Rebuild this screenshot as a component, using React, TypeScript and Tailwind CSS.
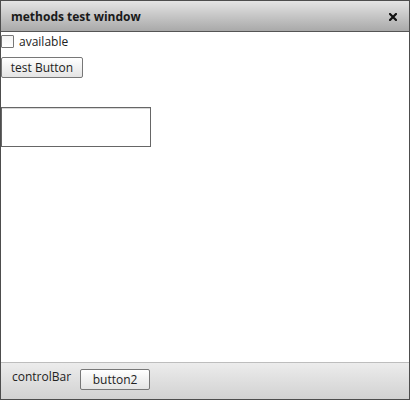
import React from "react";

export default function App() {
  return (
    <div
      className="w-[410px] h-[400px] border border-[#4d4d4d] flex flex-col bg-white text-[#222]"
      style={{ fontFamily: '"Open Sans", "Noto Sans", sans-serif' }}
    >
      <div className="h-[31px] shrink-0 border-b border-[#555] bg-gradient-to-b from-[#e4e4e4] to-[#a9a9a9] flex items-center justify-between pl-[10px] pr-[12px]">
        <span className="text-[12px] font-bold leading-none text-[#1a1a1a] mt-[1px]">methods test window</span>
        <svg width="8" height="8" viewBox="0 0 8 8" className="mt-[1px]">
          <path d="M1 1 L7 7 M7 1 L1 7" stroke="#111" strokeWidth="2.2" strokeLinecap="square" />
        </svg>
      </div>
      <div className="flex-1 flex flex-col items-start">
        <label className="flex items-center mt-[3px] gap-[5px]">
          <span className="w-[13px] h-[13px] border border-[#777] bg-gradient-to-b from-[#f4f4f4] to-white rounded-[1px]" />
          <span className="text-[12px] leading-none">available</span>
        </label>
        <button className="mt-[9px] w-[82px] h-[21px] border border-[#777] rounded-[2px] bg-gradient-to-b from-white to-[#e4e4e4] text-[12px] leading-none flex items-center justify-center">
          test Button
        </button>
        <div className="mt-[29px] w-[150px] h-[40px] border border-[#666] shadow-[inset_0_1px_0_#d8d8d8] bg-white" />
      </div>
      <div className="h-[37px] shrink-0 border-t border-[#bdbdbd] bg-gradient-to-b from-[#ececec] to-[#d2d2d2] flex items-start pl-[11px]">
        <span className="text-[12px] leading-none mt-[8px]">controlBar</span>
        <button className="ml-[9px] mt-[6px] w-[70px] h-[21px] border border-[#777] rounded-[2px] bg-gradient-to-b from-white to-[#e4e4e4] text-[12px] leading-none flex items-center justify-center">
          button2
        </button>
      </div>
    </div>
  );
}
